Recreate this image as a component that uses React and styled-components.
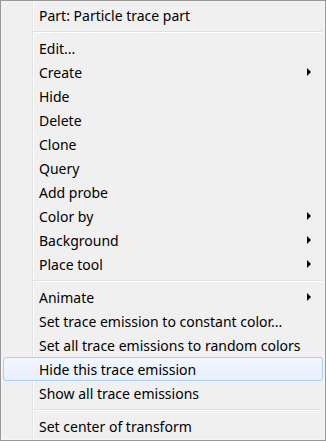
import React from "react";
import styled, { createGlobalStyle } from "styled-components";

const Global = createGlobalStyle`
  html, body {
    margin: 0;
    padding: 0;
    background: #ffffff;
  }
`;

const Menu = styled.div`
  box-sizing: border-box;
  width: 326px;
  height: 441px;
  border: 1px solid #979797;
  padding: 2px 2px 2px 2px;
  background:
    linear-gradient(
      to right,
      transparent 31px,
      #e2e3e3 31px,
      #e2e3e3 32px,
      #ffffff 32px,
      #ffffff 33px,
      transparent 33px
    ),
    #f0f0f0;
  box-shadow: inset 0 0 0 1px #f5f5f5;
  font-family: "Noto Sans", "Open Sans", sans-serif;
  font-size: 14px;
  color: #000000;
`;

const Item = styled.div`
  box-sizing: border-box;
  display: flex;
  align-items: center;
  height: 24px;
  padding: 0 11px 0 35px;
  border: 1px solid ${(p) => (p.$active ? "#aecff7" : "transparent")};
  border-radius: 3px;
  background: ${(p) =>
    p.$active ? "linear-gradient(to bottom, #f2f7fe, #e6effc)" : "transparent"};
  white-space: nowrap;
`;

const Label = styled.span`
  flex: 1;
  line-height: 21px;
`;

const Arrow = styled.span`
  width: 0;
  height: 0;
  border-top: 4px solid transparent;
  border-bottom: 4px solid transparent;
  border-left: 4px solid #000000;
`;

const Separator = styled.div`
  height: 9px;
  margin: 0 1px 0 30px;
  display: flex;
  flex-direction: column;
  justify-content: center;
  &::before {
    content: "";
    height: 1px;
    background: #e0e0e0;
  }
  &::after {
    content: "";
    height: 1px;
    background: #ffffff;
  }
`;

const groups = [
  [{ label: "Part: Particle trace part" }],
  [
    { label: "Edit..." },
    { label: "Create", sub: true },
    { label: "Hide" },
    { label: "Delete" },
    { label: "Clone" },
    { label: "Query" },
    { label: "Add probe" },
    { label: "Color by", sub: true },
    { label: "Background", sub: true },
    { label: "Place tool", sub: true },
  ],
  [
    { label: "Animate", sub: true },
    { label: "Set trace emission to constant color..." },
    { label: "Set all trace emissions to random colors" },
    { label: "Hide this trace emission", active: true },
    { label: "Show all trace emissions" },
  ],
  [{ label: "Set center of transform" }],
];

export default function App() {
  return (
    <>
      <Global />
      <Menu>
        {groups.map((group, gi) => (
          <React.Fragment key={gi}>
            {gi > 0 && <Separator />}
            {group.map((it) => (
              <Item key={it.label} $active={it.active}>
                <Label>{it.label}</Label>
                {it.sub && <Arrow />}
              </Item>
            ))}
          </React.Fragment>
        ))}
      </Menu>
    </>
  );
}
